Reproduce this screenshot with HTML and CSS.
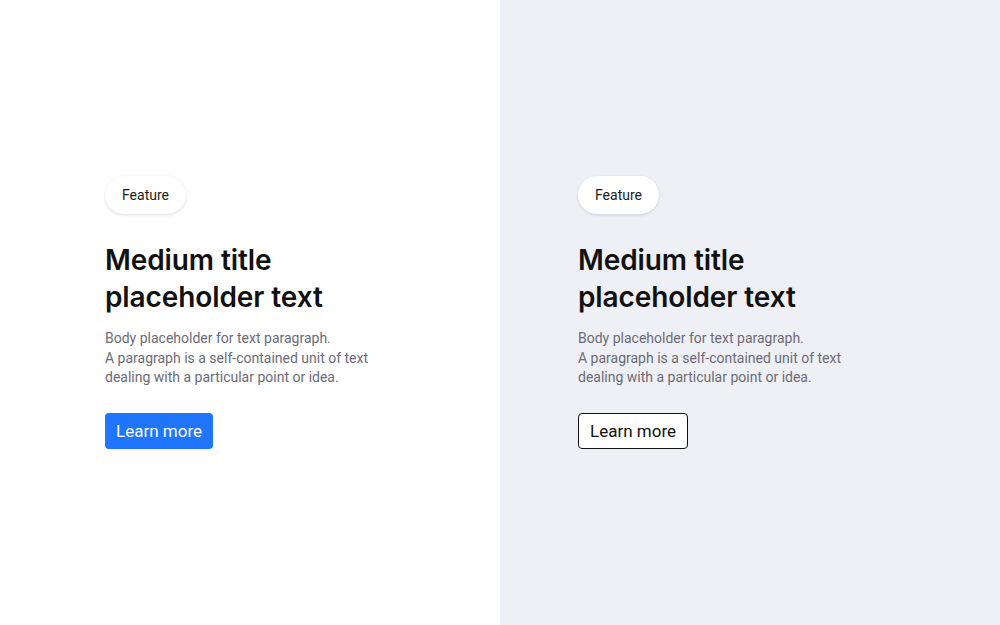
FILE: index.html
```html
<!DOCTYPE html>
<html lang="en">
<head>
    <meta charset="UTF-8">
    <meta name="viewport" content="width=device-width, initial-scale=1.0">
    <title>Feature cards</title>
    <link rel="stylesheet" href="styles.css">
</head>
<body>

    <div class="split">
        <!-- 左パネル -->
        <section class="panel panel-light">
            <div class="card">
                <span class="badge">Feature</span>
                <h2 class="title">Medium title<br>placeholder text</h2>
                <p class="body-text">Body placeholder for text paragraph.<br>A paragraph is a self-contained unit of text<br>dealing with a particular point or idea.</p>
                <button class="btn btn-primary">Learn more</button>
            </div>
        </section>

        <!-- 右パネル -->
        <section class="panel panel-grey">
            <div class="card">
                <span class="badge">Feature</span>
                <h2 class="title">Medium title<br>placeholder text</h2>
                <p class="body-text">Body placeholder for text paragraph.<br>A paragraph is a self-contained unit of text<br>dealing with a particular point or idea.</p>
                <button class="btn btn-outline">Learn more</button>
            </div>
        </section>
    </div>

</body>
</html>
```

FILE: styles.css
```css
body {
    margin: 0;
    padding: 0;
    font-family: 'Roboto', 'Liberation Sans', sans-serif;
    color: #111;
}

.split {
    display: grid;
    grid-template-columns: 500px 500px;
    height: 625px;
}

.panel {
    display: flex;
    align-items: center;
}

.panel-light {
    background: #ffffff;
    padding-left: 105px;
}

.panel-grey {
    background: #eff0f5;
    padding-left: 78px;
}

.card {
    display: flex;
    flex-direction: column;
    align-items: flex-start;
}

.badge {
    display: inline-block;
    height: 38px;
    line-height: 38px;
    padding: 0 17px;
    border-radius: 19px;
    background: #fff;
    font-size: 14px;
    color: #1a1a1a;
    box-shadow: 0 1px 3px rgba(30, 30, 60, 0.16);
}

.title {
    margin: 28px 0 0;
    font-family: 'Inter', 'Liberation Sans', sans-serif;
    font-weight: 600;
    font-size: 28px;
    line-height: 37px;
    letter-spacing: -0.1px;
    color: #111;
}

.body-text {
    margin: 13px 0 0;
    font-size: 14px;
    line-height: 19.5px;
    color: #6b6b76;
}

.btn {
    margin-top: 25px;
    height: 36px;
    padding: 0 11px;
    font-family: 'Roboto', 'Liberation Sans', sans-serif;
    font-weight: 400;
    font-size: 17px;
    border-radius: 4px;
    cursor: pointer;
}

.btn-primary {
    background: #1f75fe;
    color: #fff;
    border: none;
}

.btn-outline {
    background: #fff;
    color: #111;
    border: 1.5px solid #111;
}
```
